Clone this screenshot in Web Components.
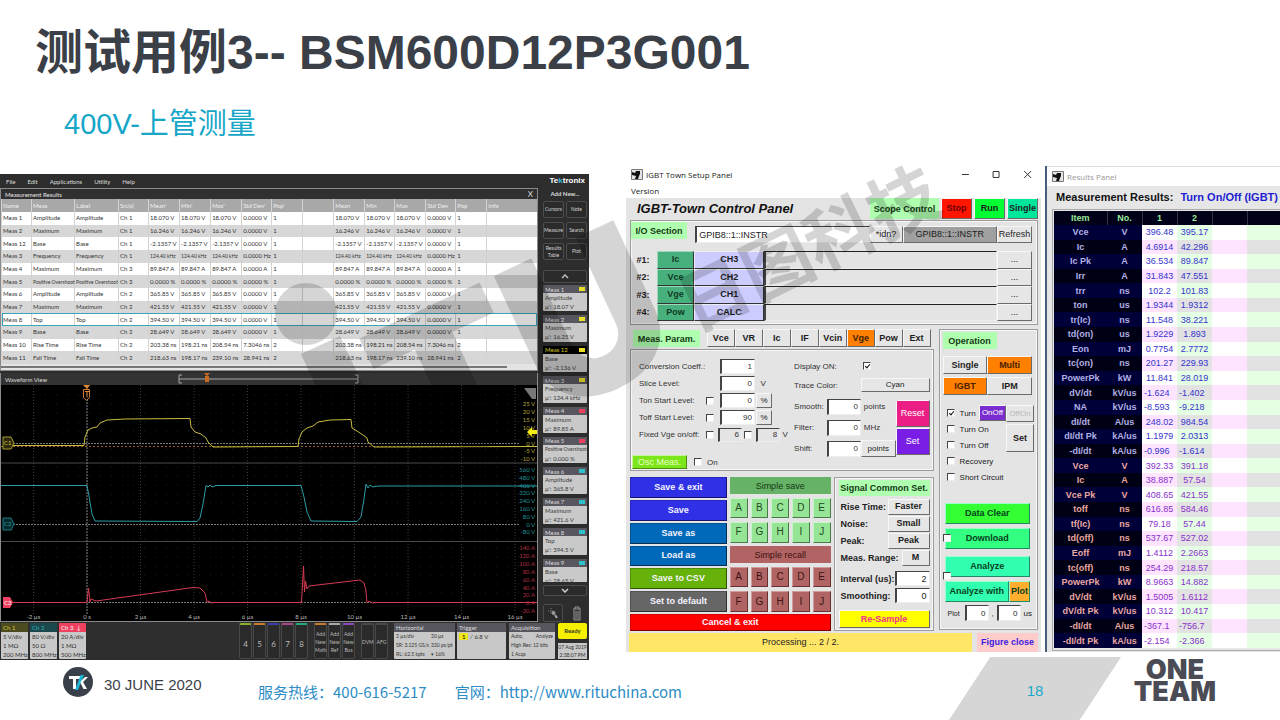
<!DOCTYPE html>
<html lang="zh-CN">
<head>
<meta charset="utf-8">
<title>BSM600D12P3G001</title>
<style>
html,body{margin:0;background:#fff}
body{font-family:"Liberation Sans","Noto Sans CJK SC",sans-serif;color:#3b3f48}
</style>
</head>
<body>
<slide-page>
  <h1 slot="title">测试用例3-- BSM600D12P3G001</h1>
  <h2 slot="subtitle">400V-上管测量</h2>
  <scope-window slot="figures"></scope-window>
  <setup-window slot="figures"></setup-window>
  <results-window slot="figures"></results-window>
  <slide-footer slot="footer"></slide-footer>
  <brand-watermark slot="overlay"></brand-watermark>
</slide-page>
<script>
const BASE = `*{box-sizing:border-box}
button,input{font:inherit;color:inherit;margin:0;padding:0;border-radius:0;min-width:0}
button{white-space:nowrap;line-height:1;cursor:pointer}
a{color:inherit;text-decoration:none}`;
const define = (name, css, html) => customElements.define(name, class extends HTMLElement {
  constructor() {
    super();
    this.attachShadow({mode: 'open'}).innerHTML =
      `<style>${BASE}${css}</style>${typeof html === 'function' ? html(this) : html}`;
  }
});

/* ---------- slide frame ---------- */
define('slide-page', `
:host{display:flex;flex-direction:column;position:relative;min-height:100vh;overflow:hidden}
::slotted(h1){margin:0;padding:18px 35px 0;font-size:48px;line-height:70px;font-weight:bold;color:#3b3f48}
::slotted(h2){margin:0;padding:16px 64px 0;font-size:29px;line-height:40px;font-weight:normal;color:#16a6c8}
.figures{display:grid;grid-template-columns:minmax(0,622fr) minmax(0,415fr) minmax(0,235fr);column-gap:4px;padding-top:20px;align-items:start}
.figures ::slotted(scope-window){margin-top:10px}
`, `<header><slot name="title"></slot><slot name="subtitle"></slot></header>
<main class="figures"><slot name="figures"></slot></main>
<slot name="footer"></slot><slot name="overlay"></slot>`);

define('brand-watermark', `
:host{display:block;position:absolute;inset:0;pointer-events:none}
svg{display:block;width:100%;height:auto}
text{font-weight:900;fill:#000}
.l{font-family:Inter,sans-serif}.c{font-family:"Noto Sans CJK SC",sans-serif;font-weight:bold;font-size:70px}
`, `<svg viewBox="0 0 1280 720" opacity=".16" aria-hidden="true">
<circle cx="306" cy="314" r="31"/>
<path d="M301 354L340 336L366 392L327 410Z"/>
<g transform="translate(426 476) rotate(-25)">
<text class="l" font-size="210" x="-8" y="0">TU</text></g>
<g transform="translate(694 333) rotate(-26)"><text class="c" x="0" y="0">日图科技</text></g>
</svg>`);

define('slide-footer', `
:host{display:block;margin-top:auto}
footer{display:flex;align-items:center;height:58px;padding-left:63px}
.tk{width:30px;height:30px;margin:-18px 11px 0 0;flex:none}
.date{font-size:15px;margin:-14px 55px 0 0;width:99px;white-space:nowrap}
.call{font:15px/20px "Noto Sans CJK SC",sans-serif;color:#2d8dc6;display:flex;gap:28px;white-space:nowrap;margin-top:2px}
.num{margin-left:auto;margin-right:13px;width:172px;flex:none;height:63px;align-self:flex-end;background:#d6d6d6;
 clip-path:polygon(24% 0,100% 0,76% 100%,0 100%);display:flex;align-items:center;justify-content:center;color:#19a9c8;font-size:15px;padding-top:4px}
.team{width:82px;flex:none;margin-right:64px;margin-top:-21px;text-align:center;font:900 27px/22px Inter,sans-serif;color:#4a4b55}
.team span{display:flex;justify-content:center}
`, `<footer>
<svg class="tk" viewBox="0 0 30 30" role="img" aria-label="TK"><circle cx="15" cy="15" r="15" fill="#3a4049"/>
<path d="M6 9h11v3h-4v10h-3V12H6z" fill="#fff"/><path d="M17.500 8h3.500l-6 15h-3z" fill="#20b4d6"/><path d="M18 14l4-4h3l-5 5 4 7h-3.500l-3-6z" fill="#fff"/></svg>
<span class="date">30 JUNE 2020</span>
<div class="call"><span>服务热线：400-616-5217</span><span>官网：<a href="http://www.rituchina.com">http://www.rituchina.com</a></span></div>
<div class="num">18</div>
<div class="team"><span>ONE</span><span>TEAM</span></div>
</footer>`);

/* ---------- oscilloscope ---------- */
const meas = [
 ['Meas 1','Amplitude','Ch 1','18.070 V','18.070 V','18.070 V','0.0000 V','1'],
 ['Meas 2','Maximum','Ch 1','16.246 V','16.246 V','16.246 V','0.0000 V','1'],
 ['Meas 12','Base','Ch 1','-2.1357 V','-2.1357 V','-2.1357 V','0.0000 V','1'],
 ['Meas 3','Frequency','Ch 1','124.40 kHz','124.40 kHz','124.40 kHz','0.0000 Hz','1'],
 ['Meas 4','Maximum','Ch 3','89.847 A','89.847 A','89.847 A','0.0000 A','1'],
 ['Meas 5','Positive Overshoot','Ch 3','0.0000 %','0.0000 %','0.0000 %','0.0000 %','1'],
 ['Meas 6','Amplitude','Ch 2','365.85 V','365.85 V','365.85 V','0.0000 V','1'],
 ['Meas 7','Maximum','Ch 2','421.55 V','421.55 V','421.55 V','0.0000 V','1'],
 ['Meas 8','Top','Ch 2','394.50 V','394.50 V','394.50 V','0.0000 V','1'],
 ['Meas 9','Base','Ch 2','28.649 V','28.649 V','28.649 V','0.0000 V','1'],
 ['Meas 10','Rise Time','Ch 2','203.38 ns','198.21 ns','208.54 ns','7.3046 ns','2'],
 ['Meas 11','Fall Time','Ch 2','218.63 ns','198.17 ns','239.10 ns','28.941 ns','2']];
define('scope-results', `
:host{display:block;border:1px solid #8a8a8a;background:#e3e3e3}
.bar{display:flex;justify-content:space-between;align-items:center;height:10px;background:#303030;color:#e8e8e8;padding:0 4px;font-size:6px}
.bar button{background:none;border:0;color:#ddd;font-size:8px}
table{border-collapse:collapse;table-layout:fixed;width:100%;height:165px;font-size:6px;line-height:8px;color:#333;background:#fff}
th{background:#a8a8a8;color:#f0f0f0;font-weight:normal;height:13px}
th,td{text-align:left;padding:0 0 0 1px;border-left:1px solid #d2d2d2;white-space:nowrap}
td.long{font-size:5px}
tbody tr:nth-child(even){background:#d7d7d7}
tbody tr.sel{outline:1px solid #3aa6bd;outline-offset:-1px}
.scroll{height:6px;padding:2px 30px 0 0}
.scroll i{display:block;height:2px;background:#777}
`, `<div class="bar"><span>Measurement Results</span><button aria-label="Close">X</button></div>
<table><colgroup>${[30,43,44,30,31,31,31,30,31,31,31,30,31,30,31,50].map(w=>`<col style="width:${w}px">`).join('')}</colgroup>
<thead><tr>${["Name","Meas","Label","Src(s)","Mean'","Min'","Max'","Std Dev'","Pop'","","Mean","Min","Max","Std Dev","Pop","Info"].map(h=>`<th>${h}</th>`).join('')}</tr></thead>
<tbody>${meas.map(m=>`<tr${m[0]==='Meas 8'?' class="sel"':''}>${[m[0],m[1],m[1],...m.slice(2),'',...m.slice(3),''].map(c=>`<td${c.length>9?' class="long"':''}>${c}</td>`).join('')}</tr>`).join('')}</tbody></table>
<div class="scroll"><i></i></div>`);

const ticks = (list, top, step, unit, color) => list.map((v,i)=>`<text x="535" y="${Math.round(top+i*step)}" text-anchor="end" fill="${color}">${v} ${unit}</text>`).join('');
const gridX = Array.from({length:10},(_,i)=>33.5+i*53.5);
define('scope-plot', `
:host{display:block;border:1px solid #8a8a8a;border-top:0;background:#000}
.bar{display:flex;align-items:center;height:12px;background:#333;color:#ddd;padding-left:4px;font-size:6px}
.bar svg{margin-left:auto;width:181px;height:12px;margin-right:178px}
.plot{display:block;width:100%;height:auto}
text{font-size:6px}
`, `<div class="bar"><span>Waveform View</span>
<svg viewBox="0 0 181 12"><path d="M4 2H1V10H4M177 2H180V10H177M1 6H180" fill="none" stroke="#aaa"/><path d="M26 0h6l-3 3zM27 3h4v6h-4z" fill="#c96a22"/></svg></div>
<svg class="plot" viewBox="1 386 536 236">
<g stroke="#3c3c3c" stroke-dasharray="1 2" fill="none">${gridX.map(x=>`<path d="M${x} 386V615"/>`).join('')}</g>
<g stroke="#222" stroke-dasharray="1 10" fill="none">${Array.from({length:24},(_,i)=>396+i*9).map(y=>`<path d="M12 ${y}H520"/>`).join('')}</g>
<g stroke="#4a4a4a" fill="none"><path d="M1 464H537M1 542.5H537"/></g>
<g stroke="#777" stroke-dasharray="2 1" fill="none"><path d="M13 444.500H520M13 525.500H520M13 603.500H520M87 400V615"/></g>
<path d="M1 447.500H537" stroke="#9a5a1e" stroke-dasharray="2 2" fill="none"/>
<g fill="none" stroke-linejoin="round">
<path stroke="#c9bd3f" d="M13 446.500H84L85 438L88 431L92 429L97 428L100 424L107 421L125 420L190 419.500L191 428L195 433L201 435L206 439L208 443L213 448L298 447.500L299 440L302 433L307 429L313 427L318 423L330 421L351 420.500L352 429L357 432L363 436L367 439L368 443L374 448L537 447.500"/>
<path stroke="#2c9ca6" d="M1 486.500H87L89 497L92 515L95 522L197 522.500L200 519L203 505L206 486.500L208 488L210 486L212 488L216 486.500H301L304 498L307 513L311 522L357 522.500L361 518L364 500L366 485L368 489L370 486L373 488L378 487H537"/>
<path stroke="#d63a52" d="M13 603.500H87L88.500 589L90 603L91 600L96 602L193 588.500L200 589L205 594L207 603L209 602L211 604L214 603.500H301.500L303.500 567L304.500 593L305.500 582L307 590L309 587L360 581L364 584L366 592L367 604L369 602L372 604L376 603.500H537"/>
</g>
<g stroke="#c87a2c" fill="none"><path d="M83.500 390.500h6v8l-3 3l-3-3z"/></g><path d="M83 386h7l-3 4z" fill="#e08a32"/>
<path d="M85 392.500h4M87 392v6" stroke="#e08a32" fill="none"/>
<g stroke-width="1"><path d="M3 438h8l3 6l-3 6H3z" fill="#2c2a0a" stroke="#a59b35"/><path d="M3 519h8l3 6l-3 6H3z" fill="#06292c" stroke="#1f7a82"/><path d="M3 598h7l3 5.500l-3 5.500H3z" fill="#f0405f"/></g>
<text x="4" y="446" fill="#d4c84a">C1</text><text x="4" y="527" fill="#2aa0aa">C2</text><text x="4" y="606" fill="#fff">C3</text>
<path d="M524 389h12v11h-4z" fill="#777"/><path d="M537 435h-5v3l-5-5l5-5v3h5z" fill="#f6ee10"/>
${ticks([25,20,15,10,5,0,-5,-10],407,7.9,'V','#b3a93a')}
${ticks([560,480,400,320,240,160,80,0,-80],473,7.8,'V','#24929a')}
${ticks([140,120,100,80,60,40,20,0,-20],551,7.9,'A','#b02f45')}
${['-2 µs','0 s','2 µs','4 µs','6 µs','8 µs','10 µs','12 µs','14 µs','16 µs'].map((t,i)=>`<text x="${gridX[i]}" y="620" text-anchor="middle" fill="#bbb">${t}</text>`).join('')}
</svg>`);

define('meas-badge', `
:host{display:block;background:#c9c9c9;color:#3c3c3c;font-size:6px;line-height:9px;margin-bottom:4px;border-radius:1px;white-space:nowrap}
.h{display:flex;justify-content:space-between;align-items:center;height:8px;background:#58575f;color:#ddd;padding:0 2px 0 2px}
:host([active]) .h{background:#000;color:#f2e92a}
i{width:6px;height:4px;background:var(--tag)}
.b{padding-left:2px}
.b span{display:block}
.b .long{font-size:5px}
`, el=>`<div class="h"><span>${el.getAttribute('name')}</span><i></i></div><div class="b"><span${el.getAttribute('kind').length>12?' class="long"':''}>${el.getAttribute('kind')}</span><span>µ': ${el.getAttribute('val')}</span></div>`);

const badges=[['Meas 1','Amplitude','18.07 V','#e9df25'],['Meas 2','Maximum','16.25 V','#e9df25'],['Meas 12','Base','-2.136 V','#e9df25'],['Meas 3','Frequency','124.4 kHz','#e9df25'],['Meas 4','Maximum','89.85 A','#f0405f'],['Meas 5','Positive Overshoot','0.000 %','#f0405f'],['Meas 6','Amplitude','365.8 V','#2bc2cc'],['Meas 7','Maximum','421.6 V','#2bc2cc'],['Meas 8','Top','394.5 V','#2bc2cc'],['Meas 9','Base','28.65 V','#2bc2cc']];
define('scope-sidebar', `
:host{display:flex;flex-direction:column;padding:0 2px 0 2px;color:#ddd;font-size:6px}
.add{text-align:center;line-height:11px;height:13px;font-weight:bold}
.btns{display:grid;grid-template-columns:1fr 1fr;gap:4px 2px;grid-auto-rows:17px}
button{background:#2b2b2b;border:1px solid #4c4c4c;border-radius:2px;color:#d5d5d5;white-space:normal;line-height:7px}
.btns button{font-size:5px}
.up{height:13px;margin-top:10px}.down{height:11px;margin-top:3px}
svg{display:block;margin:auto}
.list{height:297px;overflow:hidden;margin-top:2px}
.list div{display:grid;grid-template-rows:repeat(10,1fr);height:304px}
.tools{display:grid;grid-template-columns:20px 20px;justify-content:space-between;margin-top:8px;height:18px}
.tools button:last-child{border:0;background:none}
`, `<div class="add">Add New...</div>
<div class="btns">${['Cursors','Note','Measure','Search','Results Table','Plot'].map(t=>`<button>${t}</button>`).join('')}</div>
<button class="up" aria-label="Up"><svg width="8" height="5" viewBox="0 0 8 5"><path d="M1 4L4 1L7 4" stroke="#bbb" stroke-width="1.500" fill="none"/></svg></button>
<div class="list"><div>${badges.map(b=>`<meas-badge name="${b[0]}" kind="${b[1]}" val="${b[2]}" style="--tag:${b[3]}"${b[0]==='Meas 12'?' active':''}></meas-badge>`).join('')}</div></div>
<button class="down" aria-label="Down"><svg width="8" height="5" viewBox="0 0 8 5"><path d="M1 1L4 4L7 1" stroke="#ccc" stroke-width="1.500" fill="none"/></svg></button>
<div class="tools"><button aria-label="Zoom"><svg width="12" height="12" viewBox="0 0 12 12"><path d="M1 4h5M4 1v5" stroke="#777" stroke-dasharray="1 1"/><circle cx="6.500" cy="6" r="2" fill="#999"/><path d="M8 8l2 3" stroke="#aaa" stroke-width="2"/></svg></button>
<button aria-label="Trash"><svg width="10" height="15" viewBox="0 0 10 15"><path d="M1 3h8M3 3V1h4v2M2 4v10h6V4M4 5v8M6 5v8" stroke="#999" fill="none"/></svg></button></div>`);

define('scope-dock', `
:host{display:flex;height:38px;padding:1px 2px 1px 1px;font-size:6px;line-height:9px;color:#333;background:#2e2e2e;white-space:nowrap}
.b{background:#c8c8c8;border-radius:1px}
.b b{display:block;font-weight:normal;height:9px;padding-left:2px;background:#57565e;color:#ddd}
.b p{margin:0;padding-left:2px;line-height:9px}
.ch{width:27px;margin-right:2px}
.keys{display:flex;gap:1px;margin-left:auto}
button{width:13px;background:#2a2a2a;border:1px solid #484848;border-radius:2px;color:#bbb;white-space:normal;line-height:8px;padding:0;border-top:2px solid var(--c,#484848)}
.keys button{font-size:5px}
.keys .n{font-size:8px;padding-top:4px}
.keys .gap{margin-left:5px}
.hz{width:61px;margin-left:6px}.tr{width:49px;margin-left:2px}.aq{width:46px;margin-left:3px}
.two{display:flex;justify-content:space-between;padding-right:2px}
.hz span:last-child{width:22px}
.hz,.aq{font-size:5px}
.hz b,.aq b{font-size:6px}
.st{width:29px;margin-left:3px;display:flex;flex-direction:column;gap:4px}
.st button{background:#f4f000;color:#333;width:auto;height:16px;border:0;padding:0;font-weight:bold}
.st div{background:#c8c8c8;flex:1;text-align:center;line-height:8px;font-size:5px}
mark{background:#eee61c;border-radius:1px;padding:0 3px}
`, `<div class="b ch"><b style="background:#4c4b20;color:#d6cd3a">Ch 1</b><p>5 V/div</p><p>1 MΩ</p><p>200 MHz</p></div>
<div class="b ch"><b style="background:#1b484c;color:#2fb3bd">Ch 2</b><p>80 V/div</p><p>50 Ω</p><p>800 MHz</p></div>
<div class="b ch"><b style="background:#f0405f;color:#fff">Ch 3 &nbsp;↓</b><p>20 A/div</p><p>1 MΩ</p><p>500 MHz</p></div>
<div class="keys">${[['4','#8cae2e'],['5','#c97c30'],['6','#3a3fa8'],['7','#a8498c'],['8','#22a878']].map(k=>`<button class="n" style="--c:${k[1]}">${k[0]}</button>`).join('')}
<button class="gap" style="--c:#c97c30">Add New Math</button><button style="--c:#aaa">Add New Ref</button><button style="--c:#8c4cb8">Add New Bus</button>
<button class="gap">DVM</button><button>AFG</button></div>
<div class="b hz"><b>Horizontal</b><p class="two"><span>2 µs/div</span><span>20 µs</span></p><p class="two"><span>SR: 3.125 GS/s</span><span>320 ps/pt</span></p><p class="two"><span>RL: 62.5 kpts</span><span>▾ 16%</span></p></div>
<div class="b tr"><b>Trigger</b><p><mark>1</mark> ∕ 6.8 V</p></div>
<div class="b aq"><b>Acquisition</b><p class="two"><span>Auto,</span><span>Analyze</span></p><p>High Res: 12 bits</p><p>1 Acqs</p></div>
<div class="st"><button>Ready</button><div>07 Aug 2019<br>2:38:07 PM</div></div>`);

define('scope-window', `
:host{display:block;background:#2d2d2d;margin-right:33px;font-family:Lato,"Liberation Sans",sans-serif;color:#ddd}
.menu{display:flex;align-items:center;height:14px;font-size:6px;padding-left:6px;gap:12px;white-space:nowrap}
.logo{margin-left:auto;margin-right:4px;font:bold 8px/14px "Liberation Sans",sans-serif;color:#fff}
.logo em{font-style:normal;color:#35b6d8}
.body{display:grid;grid-template-columns:minmax(0,538fr) 3px 48px}
.left{display:flex;flex-direction:column;gap:2px}
`, `<nav class="menu"><a href="#file">File</a><a href="#edit">Edit</a><a href="#apps">Applications</a><a href="#utility">Utility</a><a href="#help">Help</a><span class="logo">Te<em>k</em>tronix</span></nav>
<div class="body"><div class="left"><scope-results></scope-results><scope-plot></scope-plot></div><span></span><scope-sidebar></scope-sidebar></div>
<scope-dock></scope-dock>`);

/* ---------- IGBT-Town setup ---------- */
const PANEL = `
button{border:1px solid;border-color:#f7f7f7 #6a6a6a #6a6a6a #f7f7f7;background:#e6e6e6;color:#1c1c1c}
.frame{border:1px solid #9c9c9c;box-shadow:inset 1px 1px #f6f6f6,inset -1px -1px #f6f6f6}
.tag{background:#b0ffb0;color:#153a15;font-weight:bold;font-size:9px;display:flex;align-items:center;justify-content:center;white-space:nowrap}
input:not([type=checkbox]){border:1px solid;border-color:#444 #eee #eee #444;border-left-width:2px;background:#fff;text-align:right;padding:0 2px;width:100%;height:16px;outline:0}
input[type=checkbox]{appearance:none;width:8px;height:8px;background:#fff;border:1px solid;border-color:#444 #eee #eee #444;flex:none}
input[type=checkbox]:checked{position:relative}
input[type=checkbox]:checked::after{content:"";position:absolute;left:2px;top:0;width:2px;height:4px;border:solid #111;border-width:0 1px 1px 0;transform:rotate(40deg)}
`;
define('io-section', PANEL+`
:host{display:block;font-size:9px;color:#222}
.frame{height:105px;padding:1px 5px 4px 0}
.top{display:grid;grid-template-columns:56fr 8fr 174fr 33fr 94fr 35fr;height:28px;align-items:end}
.top .tag{height:17px;align-self:start}
.top .field{margin-bottom:7px}
.top button{height:17px;margin-bottom:7px}
.rows{display:grid;grid-template-columns:26fr 37fr 70fr 232fr 35fr;grid-template-rows:repeat(4,1fr);height:70px;margin-top:1px}
.rows label{font-weight:bold;align-self:center;text-align:center;padding-right:2px}
.rows .k{background:#48b07c;font-weight:bold;border-color:#9fd8bb #333 #333 #9fd8bb;color:#0f3a25}
.rows .c{background:#ccccff;font-weight:bold;border-color:#eee #333 #333 #eee}
.rows input:not([type=checkbox]){background:#e4e4e4;height:auto;border-top-color:#222}
`, `<section class="frame"><div class="top"><span class="tag">I/O Section</span><span></span><input class="field" style="text-align:left;height:17px" value="GPIB8::1::INSTR" aria-label="Resource"><button>*idn?</button><button style="background:#a0a0a0">GPIB8::1::INSTR</button><button>Refresh</button></div>
<div class="rows">${[['Ic','CH3'],['Vce','CH2'],['Vge','CH1'],['Pow','CALC']].map((r,i)=>`<label for="f${i}">#${i+1}:</label><button class="k">${r[0]}</button><button class="c">${r[1]}</button><input id="f${i}"><button>...</button>`).join('')}</div></section>`);

define('param-section', PANEL+`
:host{display:block;font-size:8px;color:#333}
.tabs{display:grid;grid-template-columns:67fr 7fr repeat(8,28fr) 1fr;height:20px;padding:0 2px 2px 3px}
.tabs button{font-weight:bold;font-size:9px}
.tabs button.on{background:#ff8000;color:#402000}
.tabs .tag{margin-top:1px}
.frame{height:122px;display:grid;grid-template-columns:165fr 137fr;padding:8px 3px 0 0}
.l{padding-left:8px}
.row{display:flex;align-items:center;height:17px;white-space:nowrap}
.row label{width:67px}
.row .ck{width:12px;display:flex}
.row span.f{width:35px;margin-left:2px;margin-right:1px;display:flex}
.row .s{width:24px;display:flex}
.row .s input:not([type=checkbox]){background:#e4e4e4;height:14px}
.row .f input:not([type=checkbox]){height:15px}
.row button{width:16px;height:15px}
.osc{display:flex;align-items:center;gap:7px;margin:12px 0 0 -7px}
.osc button{background:#7ce61a;color:#eaffc8;width:55px;height:14px;font-size:9px;border-color:#c8f59a #4a8a10 #4a8a10 #c8f59a}
.osc label{display:flex;gap:5px;align-items:center}
.r{display:grid;grid-template-columns:33fr 34fr 35fr 34fr;grid-template-rows:16px 22px 21px 21px 21px;align-items:center}
.r .w{grid-column:span 2}
.r .pt{padding-left:3px}
.r .act{grid-column:4;grid-row:3/6;display:grid;grid-template-rows:27px 27px;gap:1px;align-self:center;font-size:9px}
.act button{color:#fff}
`, `<div class="tabs"><span class="tag">Meas. Param.</span><span></span>${['Vce','VR','Ic','IF','Vcin','Vge','Pow','Ext'].map(t=>`<button${t==='Vge'?' class="on"':''}>${t}</button>`).join('')}</div>
<section class="frame"><div class="l">
<div class="row"><label for="cc" style="width:79px">Conversion Coeff.:</label><span class="f"><input id="cc" value="1"></span></div>
<div class="row"><label for="sl" style="width:79px">Slice Level:</label><span class="f"><input id="sl" value="0"></span>&nbsp; V</div>
<div class="row"><label for="on">Ton Start Level:</label><span class="ck"><input type="checkbox" aria-label="Use Ton level"></span><span class="f"><input id="on" value="0"></span><button>%</button></div>
<div class="row"><label for="of">Toff Start Level:</label><span class="ck"><input type="checkbox" aria-label="Use Toff level"></span><span class="f"><input id="of" value="90"></span><button>%</button></div>
<div class="row"><label for="v1">Fixed Vge on/off:</label><span class="ck"><input type="checkbox" aria-label="Fix Vge on"></span><span class="s"><input id="v1" value="6"></span>&nbsp;<span class="ck"><input type="checkbox" aria-label="Fix Vge off"></span><span class="s"><input value="8" aria-label="Vge off"></span>&nbsp;V</div>
<div class="osc"><button>Osc Meas.</button><label><input type="checkbox">On</label></div></div>
<div class="r"><label class="w" for="do">Display ON:</label><input type="checkbox" id="do" checked style="margin-left:2px"><span></span>
<label class="w" for="tc">Trace Color:</label><button id="tc" class="w" style="height:14px">Cyan</button>
<label for="sm">Smooth:</label><input id="sm" value="0"><span class="pt">points</span>
<label for="fi">Filter:</label><input id="fi" value="0"><span class="pt">MHz</span>
<label for="sh">Shift:</label><input id="sh" value="0"><button style="height:17px">points</button>
<div class="act"><button style="background:#ea1e84">Reset</button><button style="background:#7a1ee6">Set</button></div></div></section>`);

const keys = cls => `<div class="keys ${cls}">${[...'ABCDEFGHIJ'].map(k=>`<button>${k}</button>`).join('')}</div>`;
define('action-grid', PANEL+`
:host{display:grid;grid-template-columns:97fr 101fr;grid-template-rows:135px 17px;gap:2px 3px;font-size:9px}
.a{display:grid;grid-template-rows:repeat(6,1fr);gap:2px}
.a button,.x{font-weight:bold;color:#f4f4ff;background:var(--c);border-color:#0003 #0008 #0008 #0003}
.x{grid-column:1/3;--c:#f00}
.b{display:grid;grid-template-rows:17px 45px 17px 45px;align-content:space-between}
h3{margin:0;font-weight:normal;font-size:9px;display:grid;place-items:center}
.keys{display:grid;grid-template-columns:repeat(5,1fr);grid-template-rows:1fr 1fr;gap:4px 3px;font-size:10px}
.g button{background:#96e496;color:#234a23;border-color:#c8f5c8 #4a7a4a #4a7a4a #c8f5c8}
.r button{background:#b06464;color:#3c1414;border-color:#d09a9a #6a3030 #6a3030 #d09a9a}
`, `<div class="a">${[['Save & exit','#3030e6'],['Save','#3030e6'],['Save as','#0068b8'],['Load as','#0068b8'],['Save to CSV','#66b20a'],['Set to default','#666']].map(b=>`<button style="--c:${b[1]}">${b[0].replace('&','&amp;')}</button>`).join('')}</div>
<div class="b"><h3 style="background:#66b266;color:#173a17">Simple save</h3>${keys('g')}<h3 style="background:#b26464;color:#3c1010">Simple recall</h3>${keys('r')}</div>
<button class="x">Cancel &amp; exit</button>`);

define('signal-settings', PANEL+`
:host{display:block;font-size:9px;font-weight:bold;color:#222}
.frame{height:154px;padding:2px 3px 2px 4px;display:flex;flex-direction:column}
.tag{height:16px;margin-bottom:2px}
.row{display:flex;justify-content:space-between;align-items:center;height:17px;white-space:nowrap;padding-left:2px}
.row button{height:16px;width:42px}
.row input:not([type=checkbox]){width:35px;font-weight:normal;height:15px}
.re{background:#ff0;color:#f0308a;height:18px;margin-top:auto}
button{font-weight:bold}
`, `<section class="frame"><span class="tag">Signal Common Set.</span>
<div class="row"><span>Rise Time:</span><button>Faster</button></div><div class="row"><span>Noise:</span><button>Small</button></div>
<div class="row"><span>Peak:</span><button>Peak</button></div><div class="row"><span>Meas. Range:</span><button style="width:28px">M</button></div>
<div class="row" style="margin-top:4px"><label for="iv">Interval (us):</label><input id="iv" value="2"></div>
<div class="row"><label for="so">Smoothing:</label><input id="so" value="0"></div>
<button class="re">Re-Sample</button></section>`);

define('operation-panel', PANEL+`
:host{display:block;font-size:9px;color:#222}
.frame{height:301px;padding:2px 5px 0 3px;display:flex;flex-direction:column}
.tag{width:54px;height:17px}
.pair{display:grid;grid-template-columns:1fr 1fr;height:18px;margin-top:3px}
.pair button,.big{font-weight:bold}
.on{background:#ff8000;color:#4a2000}
.checks{display:grid;grid-template-columns:1fr 28px;margin:10px -2px 0 4px;height:80px;font-size:8px}
.checks label{display:flex;align-items:center;gap:5px;height:16px;white-space:nowrap}
.rt{display:grid;grid-template-rows:17px 28px;gap:2px}
.big{font-size:9px}
.tw{display:grid;grid-template-columns:1fr 27px;align-items:center}
.tw button{height:16px}
.st{display:flex;flex-direction:column;gap:4px;margin:18px 2px 0;position:relative}
.st button{height:21px;font-weight:bold;color:#064020;border-color:#9fc #286 #286 #9fc}
.line{display:grid;grid-template-columns:65fr 21fr}
.ov{position:absolute;left:-2px}
.plot{display:grid;grid-template-columns:17px 24px 8px 24px 1fr;margin:3px 0 0 5px;align-items:center;font-size:8px}
.plot i{text-align:center;font-style:normal}.plot label{font-size:7px}.plot span{padding-left:3px}
`, `<section class="frame"><span class="tag">Operation</span>
<div class="pair" style="margin-top:7px"><button>Single</button><button class="on">Multi</button></div><div class="pair"><button class="on">IGBT</button><button>IPM</button></div>
<div class="checks"><div><div class="tw"><label><input type="checkbox" checked>Turn</label><button style="background:#7a2ed0;color:#fff">OnOff</button></div>
<label><input type="checkbox">Turn On</label><label><input type="checkbox">Turn Off</label><label><input type="checkbox">Recovery</label><label><input type="checkbox">Short Circuit</label></div>
<div class="rt"><button style="color:#b8b8b8">OffOn</button><button class="big">Set</button></div></div>
<div class="st"><button style="background:#33ff33">Data Clear</button><button style="background:#33ff80">Download</button><button style="background:#33ffb0;margin-top:3px">Analyze</button>
<div class="line"><button style="background:#33ffb0">Analyze with</button><button style="background:#ffae2e">Plot</button></div>
<input class="ov" type="checkbox" style="top:31px" aria-label="Auto download"><input class="ov" type="checkbox" style="top:69px" aria-label="Auto analyze"></div>
<div class="plot"><label for="p1">Plot</label><input id="p1" value="0"><i>,</i><input value="0" aria-label="Plot end"><span>us</span></div></section>`);

const APPICON = `<svg width="12" height="11" viewBox="0 0 12 11"><path d="M.5.5h11v10H.5z" fill="#e4e4e4" stroke="#777"/><path d="M1 3l3 1l1-2h4v3l-1 2l-1 3H4L5 7L1 6z" fill="#111"/></svg>`;
define('setup-window', PANEL+`
:host{display:flex;flex-direction:column;min-width:0;background:#e4e4e4;font-family:"Liberation Sans",sans-serif;font-size:9px;color:#222;height:488px}
.title{display:flex;align-items:center;gap:3px;height:20px;background:#fff;padding-left:5px;font:8px "Open Sans",sans-serif}
.win{margin-left:auto;padding-right:1px}
.ver{background:#fff;height:14px;padding-left:5px;font:8px/14px "Open Sans",sans-serif}
.head{display:flex;height:22px;padding-right:3px;gap:2px}
.head h2{margin:0 auto 0 11px;font:italic bold 13px/22px "Liberation Sans",sans-serif;color:#111;white-space:nowrap}
.head button,.head .tag{height:21px;font-weight:bold;width:31px}
.head .tag{width:69px}
.main{display:grid;grid-template-columns:304fr 99fr;gap:5px;margin:4px 3px 0 4px}
.row{display:grid;grid-template-columns:201fr 100fr;gap:3px;margin-top:6px}
io-section{margin:0 3px 0 4px}
.foot{display:grid;grid-template-columns:343fr 61fr;gap:5px;margin:2px 3px 0;height:19px;line-height:19px}
.foot div{background:#ffe666;text-align:center}
.foot button{background:#ffcccc;color:#3a1ae0;font-weight:bold;border-color:#ffcccc}
`, `<div class="title">${APPICON}<span>IGBT Town Setup Panel</span><svg class="win" width="80" height="9" viewBox="0 0 80 9"><path d="M1 4.500h7M32.500 1.500h6v6h-6zM64 1l7 7M71 1l-7 7" fill="none" stroke="#333"/></svg></div>
<div class="ver"><a href="#version">Version</a></div>
<div class="head"><h2>IGBT-Town Control Panel</h2><span class="tag">Scope Control</span><button style="background:#ff1500;color:#600">Stop</button><button style="background:#0f3">Run</button><button style="background:#00e69a">Single</button></div>
<io-section></io-section>
<div class="main"><div><param-section></param-section><div class="row"><action-grid></action-grid><signal-settings></signal-settings></div></div><operation-panel></operation-panel></div>
<div class="foot"><div>Processing ... 2 / 2.</div><button>Figure close</button></div>`);

/* ---------- results ---------- */
const res = `Vce|V|396.48|395.17
Ic|A|4.6914|42.296
Ic Pk|A|36.534|89.847
Irr|A|31.843|47.551
trr|ns|102.2|101.83
ton|us|1.9344|1.9312
tr(Ic)|ns|11.548|38.221
td(on)|us|1.9229|1.893
Eon|mJ|0.7754|2.7772
tc(on)|ns|201.27|229.93
PowerPk|kW|11.841|28.019
dV/dt|kV/us|-1.624|-1.402
NA|kV/us|-8.593|-9.218
dI/dt|A/us|248.02|984.54
dI/dt Pk|kA/us|1.1979|2.0313
-dI/dt|kA/us|-0.996|-1.614
Vce|V|392.33|391.18
Ic|A|38.887|57.54
Vce Pk|V|408.65|421.55
toff|ns|616.85|584.46
tf(Ic)|ns|79.18|57.44
td(off)|ns|537.67|527.02
Eoff|mJ|1.4112|2.2663
tc(off)|ns|254.29|218.57
PowerPk|kW|8.9663|14.882
dV/dt|kV/us|1.5005|1.6112
dV/dt Pk|kV/us|10.312|10.417
-dI/dt|A/us|-367.1|-756.7
-dI/dt Pk|kA/us|-2.154|-2.366`.split('\n').map(l=>l.split('|'));
define('results-window', `
:host{display:block;min-width:0;margin-top:2px;border-left:2px solid #46607c;background:#e6e6e6;font-family:"Liberation Sans",sans-serif;height:486px}
.title{display:flex;align-items:center;gap:3px;height:20px;background:#fff;padding-left:5px;font:8px "Open Sans",sans-serif;color:#999;border-top:1px solid #ddd}
.head{display:flex;justify-content:space-between;height:22px;line-height:22px;padding:0 2px 0 9px;font-size:11px;font-weight:bold;color:#111;white-space:nowrap}
.head b{color:#1e1ed2}
.box{border:1px solid #aaa;border-right:0;margin:1px 0 0 5px;padding:1px 0 2px 1px}
table{width:100%;height:437px;table-layout:fixed;border-collapse:collapse;font-size:9px;line-height:10px}
th,td{padding:0;text-align:center;white-space:nowrap}
thead th{background:#000018;color:#98e898;height:14px}
th+th{border-left:1px solid #334}
tr:nth-child(odd) th[scope=row],tr:nth-child(odd) .u{background:#000038}
tbody th,.u{color:#b0b0e6;background:#000014;font-weight:bold}
.off th,.off .u{color:#e8a8a0}
.v{color:#3434cc}.off .v{color:#8a30cc}
.v.n{text-align:left;padding-left:2px}
tbody tr:nth-child(odd) td:nth-child(3),tbody tr:nth-child(odd) td:nth-child(5){background:#fff}
tbody tr:nth-child(even) td:nth-child(3),tbody tr:nth-child(even) td:nth-child(5){background:#ffe4ff}
tbody tr:nth-child(odd) td:nth-child(4),tbody tr:nth-child(odd) td:nth-child(6){background:#e4ffe4}
tbody tr:nth-child(even) td:nth-child(4),tbody tr:nth-child(even) td:nth-child(6){background:#e2e2e2}
`, `<div class="title">${APPICON}<span>Results Panel</span></div>
<div class="head"><span>Measurement Results:</span><b>Turn On/Off (IGBT)</b></div>
<div class="box"><table><colgroup><col style="width:53px"><col style="width:35px"><col style="width:35px"><col style="width:35px"><col style="width:35px"><col style="width:33px"></colgroup>
<thead><tr><th>Item</th><th>No.</th><th>1</th><th>2</th><th></th><th></th></tr></thead>
<tbody>${res.map((r,i)=>`<tr${i>15?' class="off"':''}><th scope="row">${r[0]}</th><td class="u">${r[1]}</td>${r.slice(2).map(v=>`<td class="v${v[0]==='-'?' n':''}">${v}</td>`).join('')}<td></td><td></td></tr>`).join('')}</tbody></table></div>`);
</script>
</body>
</html>
